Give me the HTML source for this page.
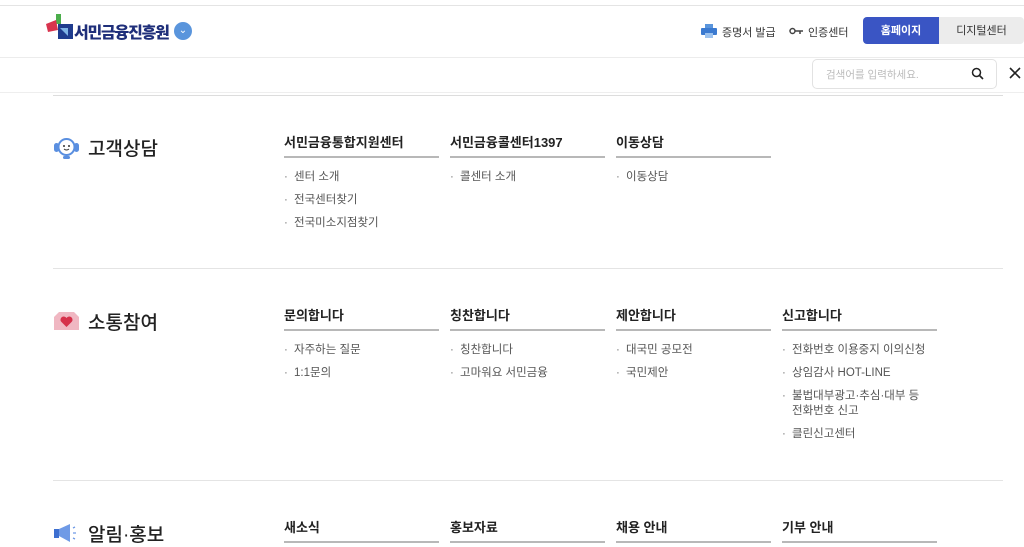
<!DOCTYPE html>
<html><head><meta charset="utf-8"><style>
*{margin:0;padding:0;box-sizing:border-box}
body{width:1024px;height:544px;overflow:hidden;background:#fff;font-family:"Liberation Sans","Noto Sans CJK KR",sans-serif;position:relative;color:#222}
.a{position:absolute}
.hl{position:absolute;height:1px;background:#e4e4e4}
.col{position:absolute;width:155px}
.col h3{font-size:13px;font-weight:700;color:#222;height:23px;border-bottom:2px solid #b8b8b8;line-height:16px;white-space:nowrap}
.col ul{list-style:none;margin-top:12px}
.col li{font-size:11.5px;color:#555;line-height:15px;margin-bottom:8px;padding-left:10px;position:relative;white-space:nowrap}
.col li:before{content:"·";position:absolute;left:0;top:0;color:#777}
.st{position:absolute;left:88px;font-size:19px;font-weight:500;color:#222}
</style></head><body>
<div class="hl" style="top:5px;left:0;width:1024px"></div>
<svg class="a" style="left:44px;top:14px" width="30" height="28" viewBox="0 0 30 28">
<rect x="12" y="0" width="5" height="10" fill="#4cae4c"/>
<polygon points="2,10 12,6 14,16 4,18" fill="#d8344e"/>
<rect x="14" y="10" width="15" height="15" fill="#1f3c8e"/>
<polygon points="16,14 24,14 24,22" fill="#7eb3e6"/>
</svg>
<div class="a" style="left:74px;top:19px;font-size:16px;font-weight:900;color:#1f2f7a;letter-spacing:-1.2px">서민금융진흥원</div>
<div class="a" style="left:174px;top:22px;width:18px;height:18px;border-radius:50%;background:#5a95dc;color:#fff;font-size:10px;text-align:center;line-height:18px">⌄</div>
<svg class="a" style="left:701px;top:24px" width="16" height="14" viewBox="0 0 16 14"><rect x="4" y="0" width="8" height="4" fill="#5a95dc"/><rect x="0" y="4" width="16" height="7" rx="1" fill="#3b7ad0"/><rect x="4" y="9" width="8" height="5" fill="#9cc2ee"/></svg>
<div class="a" style="left:722px;top:24px;font-size:11px;color:#333">증명서 발급</div>
<svg class="a" style="left:789px;top:27px" width="14" height="8" viewBox="0 0 14 8"><circle cx="3.5" cy="4" r="2.5" fill="none" stroke="#444" stroke-width="1.5"/><path d="M6 4H14M11 4V7" stroke="#444" stroke-width="1.5"/></svg>
<div class="a" style="left:808px;top:24px;font-size:11px;color:#333">인증센터</div>
<div class="a" style="left:863px;top:17px;width:76px;height:27px;padding-top:2px;background:#3a55c4;border-radius:4px 0 0 4px;color:#fff;font-size:11px;font-weight:700;text-align:center;line-height:25px">홈페이지</div>
<div class="a" style="left:939px;top:17px;width:85px;height:27px;padding-top:2px;background:#ececec;border-radius:0 4px 4px 0;color:#333;font-size:11px;text-align:center;line-height:25px">디지털센터</div>
<div class="hl" style="top:57px;left:0;width:1024px;background:#ececec"></div>
<div class="a" style="left:812px;top:59px;width:185px;height:30px;border:1px solid #e2e2e2;border-radius:5px"></div>
<div class="a" style="left:826px;top:67px;font-size:10.5px;color:#bbb">검색어를 입력하세요.</div>
<svg class="a" style="left:971px;top:67px" width="13" height="13" viewBox="0 0 13 13"><circle cx="5.5" cy="5.5" r="4" fill="none" stroke="#222" stroke-width="1.5"/><path d="M8.5 8.5L12 12" stroke="#222" stroke-width="1.6"/></svg>
<svg class="a" style="left:1009px;top:67px" width="12" height="12" viewBox="0 0 12 12"><path d="M1 1L11 11M11 1L1 11" stroke="#222" stroke-width="1.6"/></svg>
<div class="hl" style="top:92px;left:0;width:1024px;background:#eee"></div>
<div class="hl" style="top:95px;left:53px;width:950px;background:#ddd"></div>

<svg class="a" style="left:53px;top:135px" width="27" height="25" viewBox="0 0 27 25"><circle cx="13.5" cy="12" r="8" fill="#fff" stroke="#5a8fe0" stroke-width="2"/><rect x="1" y="8" width="5" height="9" rx="2.5" fill="#5a8fe0"/><rect x="21" y="8" width="5" height="9" rx="2.5" fill="#5a8fe0"/><circle cx="11" cy="11" r="1" fill="#333"/><circle cx="16" cy="11" r="1" fill="#333"/><path d="M11 14Q13.5 16 16 14" stroke="#333" fill="none"/><rect x="10" y="21" width="7" height="3" rx="1.5" fill="#5a8fe0"/></svg>
<div class="st" style="top:134px">고객상담</div>
<div class="col" style="left:284px;top:135px"><h3>서민금융통합지원센터</h3><ul><li>센터 소개</li><li>전국센터찾기</li><li>전국미소지점찾기</li></ul></div>
<div class="col" style="left:450px;top:135px"><h3>서민금융콜센터1397</h3><ul><li>콜센터 소개</li></ul></div>
<div class="col" style="left:616px;top:135px"><h3>이동상담</h3><ul><li>이동상담</li></ul></div>
<div class="hl" style="top:268px;left:53px;width:950px"></div>

<svg class="a" style="left:54px;top:312px" width="25" height="18" viewBox="0 0 25 18"><polygon points="0,5 5,0 20,0 25,5 25,18 0,18" fill="#f0b7c2"/><path d="M12.5 15L7 9.5A3 3 0 0 1 12.5 6A3 3 0 0 1 18 9.5Z" fill="#d6304a"/></svg>
<div class="st" style="top:308px">소통참여</div>
<div class="col" style="left:284px;top:308px"><h3>문의합니다</h3><ul><li>자주하는 질문</li><li>1:1문의</li></ul></div>
<div class="col" style="left:450px;top:308px"><h3>칭찬합니다</h3><ul><li>칭찬합니다</li><li>고마워요 서민금융</li></ul></div>
<div class="col" style="left:616px;top:308px"><h3>제안합니다</h3><ul><li>대국민 공모전</li><li>국민제안</li></ul></div>
<div class="col" style="left:782px;top:308px"><h3>신고합니다</h3><ul><li>전화번호 이용중지 이의신청</li><li>상임감사 HOT-LINE</li><li>불법대부광고·추심·대부 등<br>전화번호 신고</li><li>클린신고센터</li></ul></div>
<div class="hl" style="top:480px;left:53px;width:950px"></div>

<svg class="a" style="left:54px;top:523px" width="26" height="20" viewBox="0 0 26 20"><rect x="0" y="6" width="5" height="9" fill="#3d6fd0"/><polygon points="5,6 16,1 16,19 5,13" fill="#6f9ae6"/><path d="M19 5L21 4M19 10H22M19 15L21 16" stroke="#6f9ae6" stroke-width="1.3"/></svg>
<div class="st" style="top:520px">알림·홍보</div>
<div class="col" style="left:284px;top:520px"><h3>새소식</h3></div>
<div class="col" style="left:450px;top:520px"><h3>홍보자료</h3></div>
<div class="col" style="left:616px;top:520px"><h3>채용 안내</h3></div>
<div class="col" style="left:782px;top:520px"><h3>기부 안내</h3></div>
</body></html>
